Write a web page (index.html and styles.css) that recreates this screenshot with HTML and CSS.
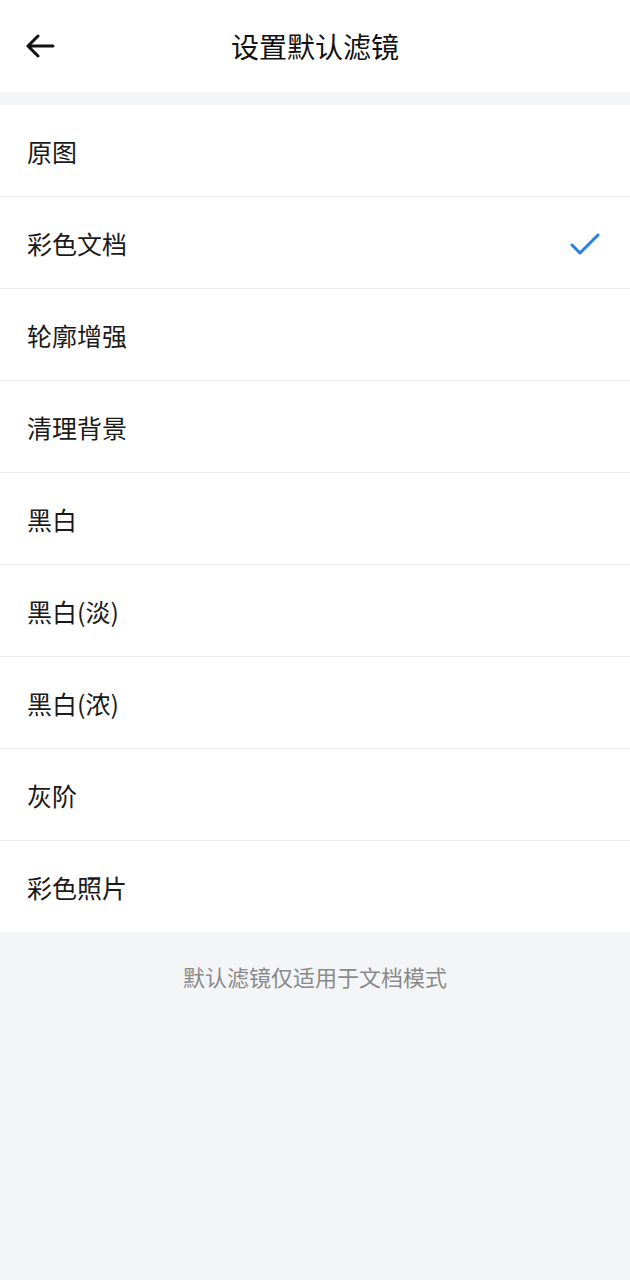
FILE: index.html
```html
<!DOCTYPE html>
<html lang="zh-CN">
<head>
    <meta charset="UTF-8">
    <meta name="viewport" content="width=device-width, initial-scale=1.0">
    <title>设置默认滤镜</title>
    <link rel="stylesheet" href="styles.css">
</head>
<body>

<div class="header">
    <svg class="back" viewBox="0 0 30 24" width="30" height="24">
        <path d="M28 12H3M13 2L3 12l10 10" fill="none" stroke="#111" stroke-width="3" stroke-linecap="round" stroke-linejoin="round"/>
    </svg>
    <h1>设置默认滤镜</h1>
</div>

<div class="list">
    <div class="item">原图</div>
    <div class="item selected">彩色文档
        <svg class="check" viewBox="0 0 30 24" width="30" height="24">
            <path d="M2 13l8 8L28 3" fill="none" stroke="#2680e4" stroke-width="3" stroke-linecap="round" stroke-linejoin="round"/>
        </svg>
    </div>
    <div class="item">轮廓增强</div>
    <div class="item">清理背景</div>
    <div class="item">黑白</div>
    <div class="item">黑白(淡)</div>
    <div class="item">黑白(浓)</div>
    <div class="item">灰阶</div>
    <div class="item">彩色照片</div>
</div>

<p class="note">默认滤镜仅适用于文档模式</p>

</body>
</html>
```

FILE: styles.css
```css
:root { --bg: #f4f5f7; --line: #ececec; --text: #1a1a1a; --muted: #8a8a8a; }
body { margin: 0; background: var(--bg); font-family: "Noto Sans CJK SC", "Noto Sans", sans-serif; color: var(--text); min-height: 1280px; }

/* top bar */
.header { height: 92px; background: white; display: flex; align-items: center; justify-content: center; position: relative; margin-bottom: 13px; }
.header h1 { margin: 0; font-size: 28px; font-weight: 400; color: #111; }
.back { position: absolute; left: 25px; top: 34px; }

/* filter list */
.list { background: white; }
.item { height: 91px; display: flex; align-items: center; justify-content: space-between; padding: 0 30px 0 27px; font-size: 25px; border-bottom: 1px solid var(--line); }
.item:last-child { border-bottom: none; }
.check { margin-top: 2px; }

.note { margin: 28px 0 0; text-align: center; font-size: 22px; color: var(--muted); }
```
